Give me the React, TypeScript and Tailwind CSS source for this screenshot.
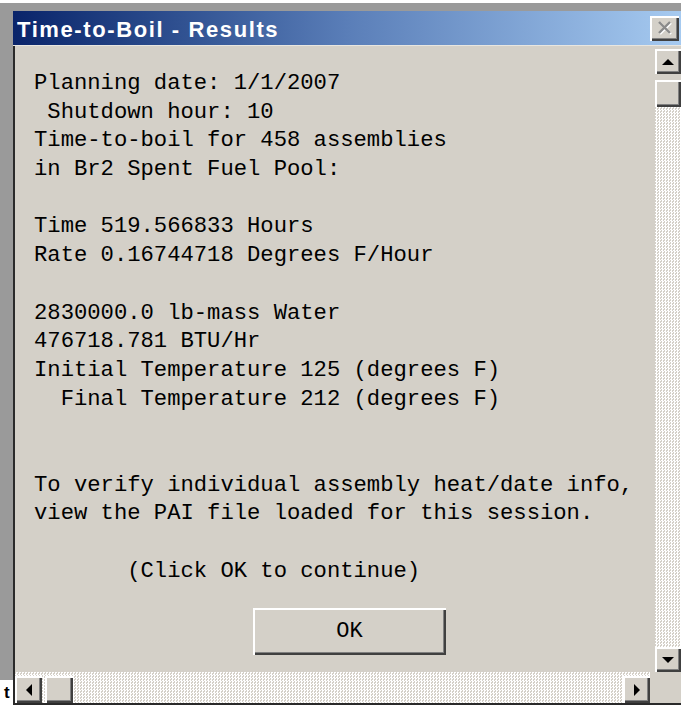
import React from 'react';

const mono = "font-['Liberation_Mono','Courier_New',monospace]";

// raised 3D edge used by the classic buttons and scroll thumbs
const raised =
  'bg-[#d4d0c8] shadow-[inset_2px_2px_0_#ffffff,inset_-2px_-2px_0_#404040,inset_-3px_-3px_0_#808080]';

// checkered scrollbar track
const track =
  'bg-[#d4d0c8] bg-[image:repeating-conic-gradient(#ffffff_0%_25%,#d4d0c8_0%_50%)] bg-[length:3px_3px]';

const lines = [
  'Planning date: 1/1/2007',
  ' Shutdown hour: 10',
  'Time-to-boil for 458 assemblies',
  'in Br2 Spent Fuel Pool:',
  '',
  'Time 519.566833 Hours',
  'Rate 0.16744718 Degrees F/Hour',
  '',
  '2830000.0 lb-mass Water',
  '476718.781 BTU/Hr',
  'Initial Temperature 125 (degrees F)',
  '  Final Temperature 212 (degrees F)',
  '',
  '',
  'To verify individual assembly heat/date info,',
  'view the PAI file loaded for this session.',
  '',
  '       (Click OK to continue)',
];

function Arrow({ dir }: { dir: 'up' | 'down' | 'left' | 'right' }) {
  const pts = {
    up: '0,6 6,0 12,6',
    down: '0,0 12,0 6,6',
    left: '6,0 6,12 0,6',
    right: '0,0 0,12 6,6',
  }[dir];
  const vertical = dir === 'up' || dir === 'down';
  return (
    <svg width={vertical ? 12 : 6} height={vertical ? 6 : 12} viewBox={vertical ? '0 0 12 6' : '0 0 6 12'}>
      <polygon points={pts} fill="#000" />
    </svg>
  );
}

function ScrollButton({ dir, className = '' }: { dir: 'up' | 'down' | 'left' | 'right'; className?: string }) {
  return (
    <div className={`${raised} flex items-center justify-center ${className}`}>
      <Arrow dir={dir} />
    </div>
  );
}

function App() {
  return (
    <div className="w-[681px] h-[708px] overflow-hidden flex flex-col bg-white">
      <div className="h-[3px] bg-white" />
      <div className="flex flex-1 min-h-0">
        {/* desktop strip on the left */}
        <div className="w-[13px] flex flex-col shrink-0">
          <div className="flex-1 bg-[#9a9a9a]" />
          <div className="h-[25px] bg-white font-['Liberation_Sans',sans-serif] text-[17px] font-bold leading-none text-black pl-[4px] pt-[4px]">
            t
          </div>
        </div>

        <div className="flex-1 flex flex-col min-w-0">
          <div className="h-[8px] bg-[#9a9a9a]" />

          {/* title bar */}
          <div className="h-[34px] flex items-center justify-between bg-gradient-to-r from-[#0a246a] via-[#5a7eb8] to-[#a6caf0] pl-[4px]">
            <span className="font-['Liberation_Sans',sans-serif] text-[22px] font-bold text-white tracking-[1.6px] leading-none pt-[3px]">
              Time-to-Boil - Results
            </span>
            <div className={`${raised} w-[29px] h-[25px] mr-[2px] flex items-center justify-center`}>
              <svg width="20" height="16" viewBox="0 0 20 16">
                <path d="M4 2 L15 13 M15 2 L4 13" stroke="#ffffff" strokeWidth="2.4" transform="translate(1 1)" />
                <path d="M4 2 L15 13 M15 2 L4 13" stroke="#8a8a8a" strokeWidth="2.4" />
              </svg>
            </div>
          </div>
          <div className="h-[1px] bg-[#e8e6e0]" />

          {/* dialog body */}
          <div className="flex-1 flex flex-col bg-[#d4d0c8] border-l-2 border-[#2a2a2a] min-h-0">
            <div className="flex flex-1 min-h-0">
              <div className="flex-1 pl-[19px] pt-[24px]">
                <div className={`${mono} text-[22.2px] leading-[28.7px] text-black whitespace-pre`}>
                  {lines.map((l, i) => (
                    <div key={i} className="h-[28.7px]">{l}</div>
                  ))}
                </div>
                <button
                  className={`${raised} ${mono} mt-[22px] ml-[219px] w-[193px] h-[47px] text-[22px] text-black flex items-center justify-center`}
                >
                  OK
                </button>
              </div>

              {/* vertical scrollbar */}
              <div className="w-[28px] pt-[3px] pl-[2px] flex flex-col">
                <ScrollButton dir="up" className="h-[25px]" />
                <div className={`flex-1 ${track} flex flex-col`}>
                  <div className="h-[6px] bg-[#d4d0c8]" />
                  <div className={`${raised} h-[27px]`} />
                  <div className="flex-1" />
                </div>
                <ScrollButton dir="down" className="h-[25px]" />
              </div>
            </div>

            {/* horizontal scrollbar + size corner */}
            <div className="h-[31px] flex">
              <div className={`flex-1 flex items-end ${track} pt-[4px]`}>
                <div className="flex flex-1 h-[27px] items-stretch">
                  <ScrollButton dir="left" className="w-[27px]" />
                  <div className={`${raised} w-[28px] ml-[3px]`} />
                  <div className="flex-1" />
                  <ScrollButton dir="right" className="w-[27px]" />
                </div>
              </div>
              <div className="w-[31px] bg-[#d4d0c8]" />
            </div>
          </div>
          <div className="h-[2px] bg-[#2a2a2a]" />
        </div>
      </div>
      <div className="h-[3px] bg-white" />
    </div>
  );
}

export default App;
